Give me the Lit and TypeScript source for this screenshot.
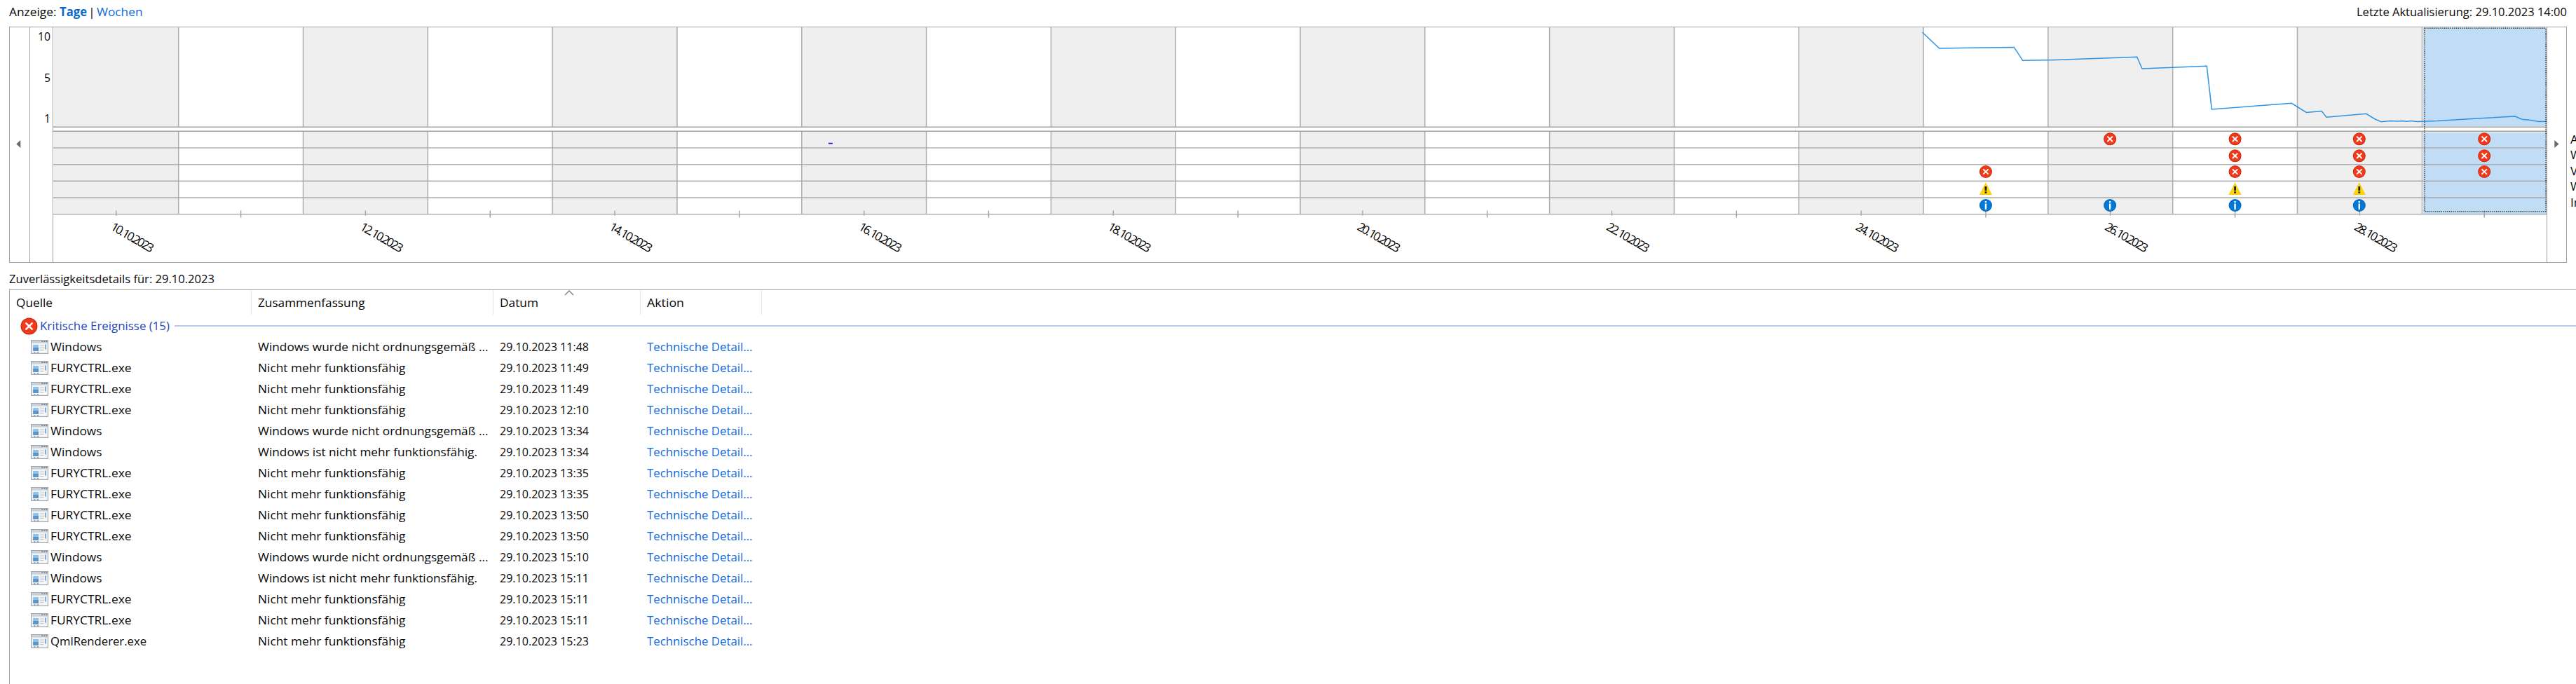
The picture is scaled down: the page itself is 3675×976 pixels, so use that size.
import { LitElement, html, svg, css } from 'lit';
import { customElement, property } from 'lit/decorators.js';

const FONT = css`"Open Sans", "Noto Sans", sans-serif`;

/** Label whose glyphs are scaled horizontally to fill a fixed width. */
@customElement('fit-text')
class FitText extends LitElement {
  @property({ type: Number }) w = 0;
  static styles = css`
    :host { display: inline-block; white-space: nowrap; flex: none; }
    .inner { display: inline-block; transform-origin: 0 50%; }
  `;
  render() {
    return html`<span class="inner"><slot></slot></span>`;
  }
  firstUpdated() {
    const inner = this.renderRoot.querySelector('.inner') as HTMLElement;
    const natural = inner.getBoundingClientRect().width;
    this.style.width = `${this.w}px`;
    if (natural > 0) inner.style.transform = `scaleX(${this.w / natural})`;
  }
}

const errorGlyph = svg`
  <circle r="9" fill="#c9260d"/><circle r="8.1" fill="#ef3b1c"/>
  <path d="M-3.7-3.7 3.7 3.7M3.7-3.7-3.7 3.7" stroke="#fff" stroke-width="1.9" fill="none"/>`;
const warnGlyph = svg`
  <path d="M0-9 9 8.6H-9Z" fill="#fdc911"/><path d="M0-6.5 7.4 7.8H-7.4Z" fill="#ffd800"/>
  <path d="M-1.4-3.4h2.8v6h-2.8zM-1.4 4h2.8v2.4h-2.8z" fill="#1c1c1c"/>`;
const infoGlyph = svg`
  <circle r="9" fill="#0a5fae"/><circle r="8.2" fill="#0078d7"/>
  <path d="M-1.2-6h2.4v2.2h-2.4zM-1.2-2.4h2.4v8.4h-2.4z" fill="#fff"/>`;

const X0 = 76.9;
const STEP = 177.81;
const DAYS = 20;
const RIGHT = 3633.2;
const ROW_LINES = [211, 234.7, 258.4, 282.1];
const ICON_Y = [198.3, 222.3, 245, 269.3, 293];
const EVENTS: Record<number, number[]> = {
  15: [2, 3, 4],
  16: [0, 4],
  17: [0, 1, 2, 3, 4],
  18: [0, 1, 2, 3, 4],
  19: [0, 1, 2],
};
const SERIES = '2742.3,46 2766.7,69 2873.3,67.4 2885.7,86.3 2933,85.5 3048.7,81.3 3056,98 3148.3,94.3 3155.3,156 3269.3,147.3 3290.3,160.5 3312,158.5 3319,167.2 3375.7,162.3 3388.3,170 3397,173.7 3410,172.4 3420,173 3427,172.4 3433,173.2 3440,172.4 3448,173.6 3477,172.6 3530,169.3 3588.3,166 3597.7,170.3 3608.5,171.2 3621.7,173.6 3633,173.3';

const LEGEND = ['Anwendungsfehler', 'Windows-Fehler', 'Verschiedene Fehler', 'Warnungen', 'Informationen'];

const WIN = { name: 'Windows', w: 73.5 };
const FURY = { name: 'FURYCTRL.exe', w: 115.5 };
const QML = { name: 'QmlRenderer.exe', w: 137 };
const CRASH = { name: 'Nicht mehr funktionsfähig', w: 210.5 };
const SHUT = { name: 'Windows wurde nicht ordnungsgemäß ...', w: 328.5 };
const HANG = { name: 'Windows ist nicht mehr funktionsfähig.', w: 313 };
const ROWS: [typeof WIN, typeof WIN, string][] = [
  [WIN, SHUT, '11:48'], [FURY, CRASH, '11:49'], [FURY, CRASH, '11:49'], [FURY, CRASH, '12:10'],
  [WIN, SHUT, '13:34'], [WIN, HANG, '13:34'], [FURY, CRASH, '13:35'], [FURY, CRASH, '13:35'],
  [FURY, CRASH, '13:50'], [FURY, CRASH, '13:50'], [WIN, SHUT, '15:10'], [WIN, HANG, '15:11'],
  [FURY, CRASH, '15:11'], [FURY, CRASH, '15:11'], [QML, CRASH, '15:23'],
];

@customElement('stability-chart')
class StabilityChart extends LitElement {
  static styles = css`
    :host { display: block; width: 3558px; height: 337px; flex: none; }
    svg { display: block; }
    .date { font: 17px ${FONT}; letter-spacing: -2.3px; fill: #000; }
  `;
  render() {
    const days = Array.from({ length: DAYS }, (_, k) => k);
    const mid = (k: number) => X0 + STEP * (k + 0.5);
    return html`<svg width="3558" height="337" viewBox="76 38 3558 337">
      ${days.filter((k) => k % 2 === 0).map((k) => svg`
        <rect x=${X0 + STEP * k} y="39.4" width=${STEP} height="141.6" fill="#efefef"/>
        <rect x=${X0 + STEP * k} y="187.5" width=${STEP} height="118" fill="#efefef"/>`)}
      <rect x="3455.3" y="39.4" width="2.6" height="141.6" fill="#dedede"/>
      <rect x="3455.3" y="187.5" width="2.6" height="118" fill="#dedede"/>
      <rect x="3457.3" y="39.4" width="175.7" height="141" fill="#c0ddf5"/>
      <rect x="3457.3" y="189" width="175.7" height="116" fill="#c0ddf5"/>
      ${days.slice(1).map((k) => svg`
        <path d="M${X0 + STEP * k} 39V181M${X0 + STEP * k} 187V305.5" stroke=${k === 19 ? '#c6c6c6' : '#adadad'} stroke-width="1.5"/>`)}
      ${ROW_LINES.map((y) => svg`<path d="M76 ${y}H${RIGHT}" stroke="#a6a6a6" stroke-width="1.6" stroke-opacity=".85"/>`)}
      <path d="M76 181.3H${RIGHT}M76 187.3H${RIGHT}M76 305.6H${RIGHT}" stroke="#a0a0a0" stroke-width="1.4"/>
      ${days.map((k) => svg`<path d="M${mid(k)} 300.5V${k % 2 ? 310.5 : 307.4}" stroke="#a0a0a0" stroke-width="1.4"/>`)}
      <path d="M1181.8 204.6h6" stroke="#1414ff" stroke-width="1.7"/>
      <polyline points=${SERIES} fill="none" stroke="#2e93e2" stroke-width="1.5"/>
      <rect x="3459" y="40.3" width="173" height="261.4" fill="none" stroke="#3c3c3c" stroke-width="1.4" stroke-dasharray="1.4 1.4"/>
      ${Object.entries(EVENTS).flatMap(([k, rows]) => rows.map((r) => svg`
        <g transform="translate(${mid(+k) + (k === '16' || k === '18' ? -0.6 : 0)} ${ICON_Y[r]})">${r < 3 ? errorGlyph : r === 3 ? warnGlyph : infoGlyph}</g>`))}
      ${days.filter((k) => k % 2 === 0).map((k) => svg`
        <text class="date" transform="translate(${mid(k) - 9} 327) rotate(30)">${10 + k}.<tspan dx="1.5">10.2023</tspan></text>`)}
    </svg>`;
  }
}

@customElement('app-root')
class AppRoot extends LitElement {
  static styles = css`
    :host { display: block; width: 3675px; height: 976px; overflow: hidden; background: #fff; font: 17px/30px ${FONT}; color: #080808; }
    .page { display: flex; flex-direction: column; height: 976px; }
    .top { display: flex; height: 36px; padding: 1.5px 12.6px 0 13px; box-sizing: border-box; flex: none; margin-bottom: 2px; }
    .top .end { margin-left: auto; }
    .link { color: #0f68da; }
    .on { font-weight: 700; color: #0a66cc; margin-left: 4.5px; }
    .bar { width: 14px; text-align: center; }
    .panel { display: flex; height: 337px; flex: none; }
    .frame { display: flex; box-sizing: border-box; width: 3649px; height: 337px; margin-left: 13px; border: 1.4px solid #a0a0a0; flex: none; }
    .nav { display: flex; box-sizing: border-box; width: 29px; padding: 161px 0 0 9px; border-right: 1.4px solid #a0a0a0; flex: none; }
    .nav.next { width: 28px; padding-left: 10px; border-right: 0; border-left: 1.4px solid #a0a0a0; }
    .axiscol { border-right: 1.4px solid #a0a0a0; width: 33px; box-sizing: border-box; flex: none; }
    .axis { display: flex; flex-direction: column; justify-content: space-between; align-items: flex-end; box-sizing: border-box; height: 140px; padding: 3px 3px 0 0; line-height: 20px; }
    stability-chart { margin-top: -1px; }
    .plot { width: 3557px; height: 334px; overflow: hidden; flex: none; }
    .legend { width: 8px; margin-left: 5px; padding-top: 150px; overflow: hidden; line-height: 22.4px; white-space: nowrap; }
    .title { height: 38px; padding: 7.5px 0 0 13px; box-sizing: border-box; flex: none; }
    .list { flex: 1; margin-left: 13px; border-left: 1.4px solid #a0a0a0; border-top: 1.6px solid #a0a0a0; }
    .head, .row { display: grid; grid-template-columns: 345px 345px 210px 173px 1fr; }
    .head { height: 36px; line-height: 35px; }
    .cell { box-sizing: border-box; padding-left: 9.3px; border-right: 1.3px solid #e2e2e2; height: 35px; position: relative; }
    .cell:last-child { border-right: 0; }
    .sort { position: absolute; left: 101px; top: 0; }
    .group { display: flex; align-items: center; height: 30px; padding-left: 14.5px; color: #1f48b8; }
    .group svg { margin-right: 3px; flex: none; }
    .rule { flex: 1; height: 1.5px; margin-left: 7px; background: #bac7ea; }
    .row { height: 30px; }
    .row span { padding-left: 9.3px; display: flex; }
    .row .src { padding-left: 30px; align-items: center; }
    .src svg { margin-right: 2.5px; }
  `;

  private appIcon = svg`<svg width="25" height="20" viewBox="0 0 25 20">
    <rect x=".6" y=".6" width="23.8" height="18.8" fill="#fafafa" stroke="#a3a8ad" stroke-width="1.3"/>
    <rect x="1.3" y="1.3" width="22.4" height="3.4" fill="#c9cfd6"/>
    <path d="M15.4 2.2h1.8M18.6 2.2h1.8M21.6 2.2h1.8" stroke="#66707c" stroke-width="1.5"/>
    <rect x="1.6" y="5.4" width="21.8" height="10.8" fill="#f1f2f3"/>
    <rect x="3.2" y="7" width="7.8" height="9" fill="#8cc3ea"/><rect x="3.2" y="11" width="7.8" height="5" fill="#5c94cc"/>
    <path d="M13 8h6M13 11.3h6M13 14.6h5" stroke="#c5c8cb" stroke-width="1.2"/>
    <path d="M21 6.5V13.5" stroke="#5e9cd4" stroke-width="1.6"/>
    <path d="M4 18h2.6M8.6 18h2.6" stroke="#8c949c" stroke-width="1.3"/></svg>`;

  render() {
    return html`<div class="page">
      <div class="top">
        <fit-text w="67.5">Anzeige:</fit-text>
        <fit-text class="on" w="39">Tage</fit-text>
        <span class="bar">|</span>
        <fit-text class="link" w="65.5">Wochen</fit-text>
        <fit-text class="end" w="300">Letzte Aktualisierung: 29.10.2023 14:00</fit-text>
      </div>
      <div class="panel">
        <div class="frame">
          <div class="nav"><svg width="7" height="11"><path d="M6.3 0V11L.3 5.5Z" fill="#6a6a6a"/></svg></div>
          <div class="axiscol"><div class="axis"><fit-text w="18">10</fit-text><fit-text w="9">5</fit-text><fit-text w="9">1</fit-text></div></div>
          <div class="plot"><stability-chart></stability-chart></div>
          <div class="nav next"><svg width="7" height="11"><path d="M.3 0V11L6.5 5.5Z" fill="#6a6a6a"/></svg></div>
        </div>
        <div class="legend">${LEGEND.map((t) => html`<div>${t}</div>`)}</div>
      </div>
      <div class="title"><fit-text w="293">Zuverlässigkeitsdetails für: 29.10.2023</fit-text></div>
      <div class="list">
        <div class="head">
          <div class="cell"><fit-text w="52">Quelle</fit-text></div>
          <div class="cell"><fit-text w="152.5">Zusammenfassung</fit-text></div>
          <div class="cell"><svg class="sort" width="14" height="8"><path d="M1 7 7 1 13 7" fill="none" stroke="#7c7c7c" stroke-width="1.4"/></svg><fit-text w="55">Datum</fit-text></div>
          <div class="cell"><fit-text w="53">Aktion</fit-text></div>
          <div class="cell"></div>
        </div>
        <div class="group">
          <svg width="25" height="25" viewBox="-9.4 -9.4 18.8 18.8">${errorGlyph}</svg>
          <fit-text w="185">Kritische Ereignisse (15)</fit-text><div class="rule"></div>
        </div>
        ${ROWS.map(([s, m, t]) => html`<div class="row">
          <span class="src">${this.appIcon}<fit-text w=${s.w}>${s.name}</fit-text></span>
          <span><fit-text w=${m.w}>${m.name}</fit-text></span>
          <span><fit-text w="127">29.10.2023 ${t}</fit-text></span>
          <span class="link"><fit-text w="150.5">Technische Detail...</fit-text></span>
        </div>`)}
      </div>
    </div>`;
  }
}
